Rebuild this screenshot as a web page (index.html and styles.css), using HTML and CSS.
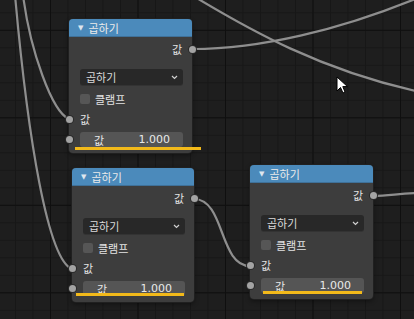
FILE: index.html
```html
<!DOCTYPE html>
<html lang="ko">
<head>
  <meta charset="UTF-8" />
  <meta name="viewport" content="width=device-width, initial-scale=1.0"/>
  <title>Node Editor</title>
  <link rel="stylesheet" href="styles.css">
</head>
<body>
  <div class="editor">
    <svg class="wires" width="414" height="319" viewBox="0 0 414 319">
      <path d="M23,-5 C30,50 52,112 69,119" />
      <path d="M15,-5 C28,140 48,260 72,269" />
      <path d="M192,49 C260,49 340,30 420,-3" />
      <path d="M195,-3 C250,30 320,70 420,92" />
      <path d="M194,199 C225,199 219,266 250,266" />
      <path d="M373,196 C390,196 400,193 420,193" />
    </svg>

    <div class="node n1">
      <div class="node-head"><span class="tri">▼</span>곱하기</div>
      <div class="node-body">
        <div class="row out">값<i class="sock"></i></div>
        <div class="select">곱하기<svg class="chev" width="7" height="5" viewBox="0 0 7 5"><polyline points="1,1 3.5,3.5 6,1" /></svg></div>
        <div class="check"><span class="box"></span>클램프</div>
        <div class="row in"><i class="sock"></i>값</div>
        <div class="field"><i class="sock"></i><span>값</span><span>1.000</span></div>
      </div>
    </div>

    <div class="node n2">
      <div class="node-head"><span class="tri">▼</span>곱하기</div>
      <div class="node-body">
        <div class="row out">값<i class="sock"></i></div>
        <div class="select">곱하기<svg class="chev" width="7" height="5" viewBox="0 0 7 5"><polyline points="1,1 3.5,3.5 6,1" /></svg></div>
        <div class="check"><span class="box"></span>클램프</div>
        <div class="row in"><i class="sock"></i>값</div>
        <div class="field"><i class="sock"></i><span>값</span><span>1.000</span></div>
      </div>
    </div>

    <div class="node n3">
      <div class="node-head"><span class="tri">▼</span>곱하기</div>
      <div class="node-body">
        <div class="row out">값<i class="sock"></i></div>
        <div class="select">곱하기<svg class="chev" width="7" height="5" viewBox="0 0 7 5"><polyline points="1,1 3.5,3.5 6,1" /></svg></div>
        <div class="check"><span class="box"></span>클램프</div>
        <div class="row in"><i class="sock"></i>값</div>
        <div class="field"><i class="sock"></i><span>값</span><span>1.000</span></div>
      </div>
    </div>

    <div class="mark m1"></div>
    <div class="mark m2"></div>
    <div class="mark m3"></div>

    <svg class="cursor" width="13" height="19" viewBox="0 0 13 19">
      <path d="M1,1 L1,15 L4.5,11.5 L7,17 L9,16 L6.8,10.6 L11.5,10.6 Z" />
    </svg>
  </div>
</body>
</html>
```

FILE: styles.css
```css
body {
  margin: 0;
  background: #1d1d1d;
  font-family: "DejaVu Sans", "Noto Sans CJK KR", sans-serif;
  overflow: hidden;
}

.editor {
  position: relative;
  width: 414px;
  height: 319px;
  overflow: hidden;
  background-color: #1e1e1e;
  background-image:
    linear-gradient(#0f0f0f 1px, transparent 1px),
    linear-gradient(90deg, #0f0f0f 1px, transparent 1px),
    linear-gradient(#171717 1px, transparent 1px),
    linear-gradient(90deg, #171717 1px, transparent 1px);
  background-size: 87.5px 87.5px, 87.5px 87.5px, 17.5px 17.5px, 17.5px 17.5px;
  background-position: 0 29.8px, 50px 0, 0 12.3px, 15px 0;
}

.wires {
  position: absolute;
  top: 0;
  left: 0;
}

.wires path {
  fill: none;
  stroke: #8e8e8e;
  stroke-width: 2.2;
}

.node {
  position: absolute;
  width: 123px;
  height: 134px;
  background: #3d3d3d;
  border-radius: 4px;
  box-shadow: 0 0 0 1px #202020, 0 2px 5px rgba(0, 0, 0, 0.45);
  display: flex;
  flex-direction: column;
  color: #e4e4e4;
  font-size: 11px;
}

.n1 { left: 69px; top: 19px; }
.n2 { left: 72px; top: 168px; width: 122px; }
.n3 { left: 250px; top: 165px; }

.node-head {
  height: 18px;
  background: #4b8abb;
  border-radius: 4px 4px 0 0;
  display: flex;
  align-items: center;
  padding-left: 9px;
  gap: 5px;
  color: #eaeaea;
  box-shadow: inset 0 -1px 0 #3f7199;
}

.tri {
  font-size: 7px;
  color: #dde6ee;
}

.node-body {
  display: flex;
  flex-direction: column;
  padding: 2px 9px 6px 11px;
}

.row {
  position: relative;
  display: flex;
  align-items: center;
  height: 20px;
}

.row.out {
  justify-content: flex-end;
  padding-right: 1px;
}

.row.in {
  height: 16px;
  margin-top: 4px;
}

.sock {
  position: absolute;
  width: 7px;
  height: 7px;
  border-radius: 50%;
  background: #a3a3a3;
  box-shadow: 0 0 0 1px #2a2a2a;
  top: 50%;
  margin-top: -3.5px;
}

.out .sock { right: -12.5px; }
.in .sock,
.field .sock { left: -14.5px; }

.select {
  margin-top: 10px;
  height: 16px;
  background: #282828;
  border-radius: 3px;
  display: flex;
  align-items: center;
  justify-content: space-between;
  padding: 0 5px 0 6px;
  color: #dadada;
  box-shadow: 0 1px 0 #333;
}

.chev polyline {
  fill: none;
  stroke: #d0d0d0;
  stroke-width: 1.2;
}

.check {
  margin-top: 6px;
  height: 16px;
  display: flex;
  align-items: center;
  gap: 5px;
}

.box {
  width: 10px;
  height: 10px;
  background: #565656;
  border-radius: 2px;
}

.field {
  position: relative;
  margin-top: 5px;
  height: 15px;
  background: #555;
  border-radius: 3px;
  display: flex;
  align-items: center;
  justify-content: space-between;
  padding: 0 13px 0 14px;
  color: #e8e8e8;
}

.mark {
  position: absolute;
  height: 3px;
  background: #f2b91a;
  z-index: 5;
}

.m1 { left: 75px; top: 147px; width: 126px; }
.m2 { left: 76px; top: 293px; width: 108px; }
.m3 { left: 263px; top: 291px; width: 99px; }

.cursor {
  position: absolute;
  left: 336px;
  top: 76px;
  z-index: 6;
}

.cursor path {
  fill: #fff;
  stroke: #000;
  stroke-width: 1;
}
```
